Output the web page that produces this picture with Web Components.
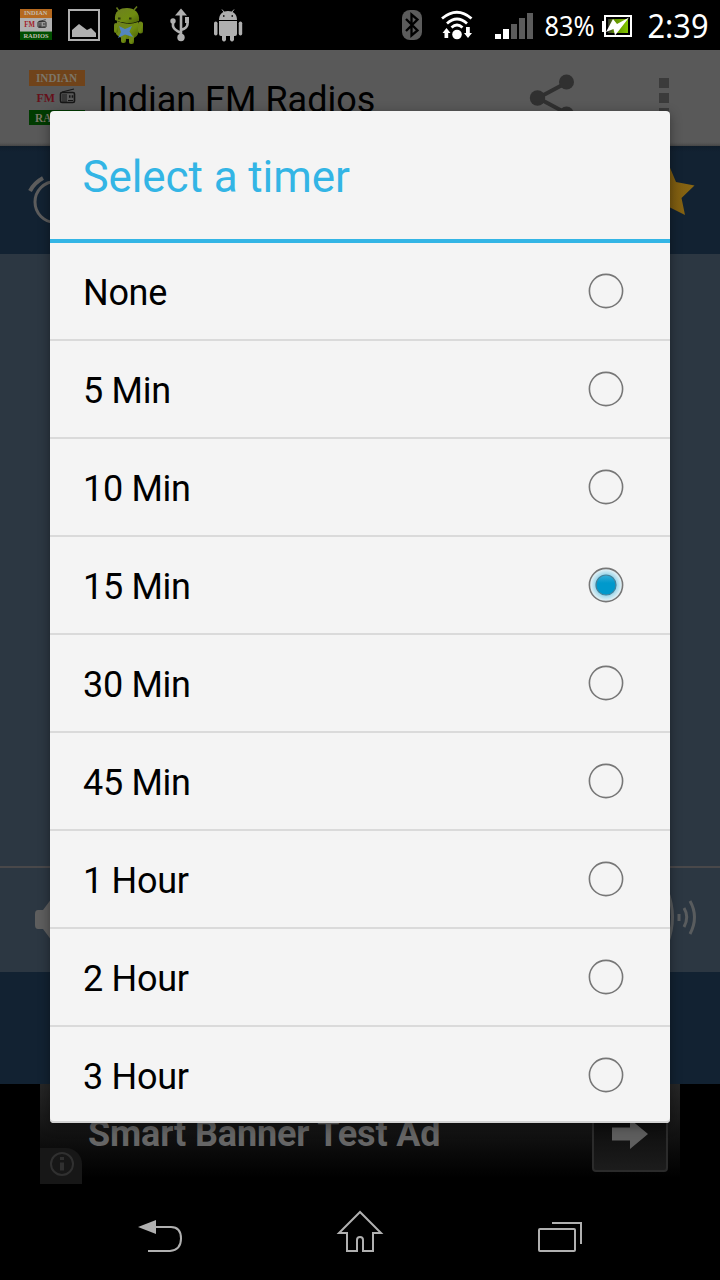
<!DOCTYPE html>
<html lang="en"><head><meta charset="utf-8"><title>Indian FM Radios</title>
<style>
html,body{margin:0;background:#000}
body{font-family:Roboto,"Liberation Sans",sans-serif;width:720px;height:1280px;overflow:hidden}
</style></head><body>
<radio-app></radio-app>
<script>
const define=(name,html,setup)=>customElements.define(name,class extends HTMLElement{
  constructor(){super();this.attachShadow({mode:'open'}).innerHTML='<style>*{box-sizing:border-box}svg{display:block;flex:none}</style>'+html;}
  connectedCallback(){if(setup)setup(this);}
});

define('radio-logo',`<style>:host{display:block;flex:none}svg{width:100%;height:100%}text{font-family:"Liberation Serif",serif;font-weight:bold}</style>
<svg viewBox="0 0 56 55" preserveAspectRatio="none">
<rect width="56" height="55" fill="var(--w)"/><rect width="56" height="16" fill="var(--o)"/><rect y="40" width="56" height="15" fill="var(--g)"/>
<text x="7" y="11.500" font-size="12" textLength="41" lengthAdjust="spacingAndGlyphs" fill="var(--t)">INDIAN</text>
<text x="7.500" y="32" font-size="13.500" textLength="18.500" lengthAdjust="spacingAndGlyphs" fill="var(--r)">FM</text>
<text x="6" y="52" font-size="12" textLength="44" lengthAdjust="spacingAndGlyphs" fill="var(--t)">RADIOS</text>
<g stroke="#161616" fill="none"><rect x="31.500" y="22.500" width="14" height="10" rx="1.500" stroke-width="1.600"/><path d="M33 22L45 19M33 25h5M33 27h5M33 29h5M33 31h5M39 30.500h5" stroke-width="1.200"/><path d="M40 26.500h1.500M42.700 26.500h1.500" stroke-width="2.500"/></g>
</svg>`);

define('status-bar',`<style>
:host{display:flex;height:50px;background:#000;align-items:flex-start}
radio-logo{width:32px;height:31px;margin:9px 0 0 20px;--o:#b5691f;--w:#b0b0b0;--g:#004f00;--t:#c2bdb0;--r:#a21c28}
.gap{flex:1}text{font-family:"Noto Sans","Open Sans",sans-serif;fill:#fff}
</style>
<radio-logo></radio-logo>
<svg width="198" height="50" viewBox="52 0 198 50">
 <defs><linearGradient id="r" x2="1" y2="1"><stop stop-color="#6d7f22"/><stop offset=".6" stop-color="#6f8c10"/><stop offset="1" stop-color="#4b6108"/></linearGradient></defs>
 <rect x="69" y="10" width="30" height="30" fill="none" stroke="#b0b0b0" stroke-width="2"/>
 <path d="M72 37V30L79 24L87 30L91 28L96 33V37Z" fill="#b0b0b0"/>
 <g fill="url(#r)"><path d="M115 20C114 11 120 8 127 8S140 12 139 21Q127 26 115 20Z"/><path d="M117 21Q128 26 138 22V34Q136 39 128 39T116 34Z"/><rect x="114" y="23" width="4" height="10" rx="2"/><rect x="138" y="21.500" width="5" height="12" rx="2.500"/><rect x="121" y="35" width="5" height="8" rx="2"/><rect x="129" y="35" width="5" height="9" rx="2"/></g>
 <path d="M119 11L116.500 7.500M134 10L137 6.500" stroke="#65791b" stroke-width="1.500"/><path d="M118 18.500h2.500M129 18.500h2.500" stroke="#27330b" stroke-width="2"/>
 <path d="M119 26L125 29L132 26L129.500 31.500L133 37L125 34.500L118 38L121 32Z" fill="#5385bd"/>
 <g stroke="#b0b0b0" fill="none" stroke-width="2.600"><path d="M181 38V12M173 22V26Q173.500 29.500 181 33M187.500 20V24Q187.500 28 181 30"/></g>
 <g fill="#b0b0b0"><path d="M181 8.500L187 15.500H175Z"/><circle cx="173" cy="21" r="2.700"/><path d="M185 17h4v6h-4z"/><circle cx="181" cy="37.500" r="3.700"/>
 <path d="M219 20C219 14 223 11 228 11S237 14 237 20Z"/><path d="M219 21H237V34Q237 36 235 36H234V40Q232 43 230 40V36H226V40Q224 43 222 40V36H221Q219 36 219 34Z"/><rect x="214" y="21.500" width="3.500" height="14" rx="1.700"/><rect x="238.700" y="21.500" width="3.500" height="14" rx="1.700"/></g>
 <path d="M224 12L222 9.500M232 12L234 9.500" stroke="#b0b0b0"/><path d="M223 16h1.500M231.500 16h1.500" stroke="#000" stroke-width="1.500"/>
</svg><div class="gap"></div>
<svg width="320" height="50" viewBox="400 0 320 50">
 <rect x="402" y="10" width="20" height="30" rx="8" fill="#5c5c5c"/><path d="M406 19L417.500 30.500L411.500 35.500V14.500L417.500 19.500L406 31" fill="none" stroke="#000" stroke-width="2.300"/>
 <g fill="none" stroke="#fff" stroke-width="2.800"><path d="M442 18.500Q457 6 471.500 18.500"/><path d="M447 23.500Q457 14.500 467 23.500"/><path d="M451.500 27.500Q457 22.500 462.500 27.500"/></g>
 <circle cx="457" cy="34.500" r="4.800" fill="#fff"/><path d="M446.500 28L450.500 33H448.200V38H444.500V33H442.500ZM468 38L472 33H469.800V27H466V33H464Z" fill="#fff"/>
 <path d="M495 34h6v5h-6zM503 29h6v10h-6z" fill="#fff"/><path d="M511 24h6v15h-6zM519 18h6v21h-6zM527 13h6v26h-6z" fill="#5c5c5c"/>
 <text x="544.500" y="36" font-size="28" textLength="50" lengthAdjust="spacingAndGlyphs">83%</text>
 <defs><linearGradient id="b"><stop offset="0" stop-color="#333"/><stop offset=".3" stop-color="#5e8c00"/><stop offset="1" stop-color="#83c600"/></linearGradient></defs>
 <path d="M602 21h3v11h-3z" fill="#fff"/><rect x="605" y="16" width="26" height="20" fill="#000" stroke="#fff" stroke-width="2"/><rect x="608" y="19" width="20" height="14" fill="url(#b)"/>
 <path d="M606 32L613 19L617 24L629 17.500L615 35.500L613.500 29Z" fill="#fff"/>
 <text x="647.500" y="37.500" font-size="32" textLength="61" lengthAdjust="spacingAndGlyphs">2:39</text>
</svg>`);

define('app-bar',`<style>
:host{display:flex;height:96px;background:linear-gradient(#595959 92px,#525252 94px,#454545);padding:20px 0 0 29px;align-items:flex-start}
radio-logo{width:56px;height:55px;--o:#70431a;--w:#595959;--g:#003b00;--t:#7c7668;--r:#661019}
span{font-size:36px;line-height:42px;margin:9px 0 0 13px;white-space:nowrap;color:#000;flex:1}
</style><radio-logo></radio-logo><span>Indian FM Radios</span>
<svg width="200" height="60" viewBox="520 70 200 60"><path d="M566 83L538 98L566 113" fill="none" stroke="#303030" stroke-width="4"/><g fill="#303030"><circle cx="566.500" cy="82" r="7.500"/><circle cx="537.500" cy="98" r="7.700"/><circle cx="566.500" cy="114" r="7.500"/></g><path d="M659 78h10v10h-10zM659 93h10v10h-10zM659 108h10v10h-10z" fill="#3b3b3b"/></svg>`);

define('tool-bar',`<style>:host{display:flex;justify-content:space-between;height:108px;background:linear-gradient(#0f1d2b,#122232 6px)}</style>
<svg width="80" height="108" viewBox="0 146 80 108" fill="none" stroke="#5c5c5c" stroke-width="3"><circle cx="55.500" cy="202" r="20.500"/><path d="M30 191Q34 183 43 178" stroke-width="4"/></svg>
<svg width="80" height="108" viewBox="640 146 80 108"><defs><linearGradient id="s" gradientUnits="userSpaceOnUse" x1="664" x2="694"><stop stop-color="#78570f"/><stop offset="1" stop-color="#896713"/></linearGradient></defs><path d="M668 163L676 182L694.500 185.500L681.500 198L685 215L669 207L653 215L656 198L644 186L661 182Z" fill="url(#s)"/></svg>`);

define('volume-bar',`<style>:host{display:flex;justify-content:space-between;height:106px;background:#2c3742;border-top:2px solid #49484a}</style>
<svg width="80" height="104" viewBox="0 868 80 104"><path d="M38 910H43L55 894V945L43 929H38Q35 929 35 925V914Q35 910 38 910Z" fill="#5e5e5e"/></svg>
<svg width="80" height="104" viewBox="640 868 80 104" fill="none" stroke="#595c5e" stroke-width="3"><path d="M667 890Q678 917 667 944"/><path d="M679 914V921"/><path d="M684 908Q689.500 917 684 927"/><path d="M690 901Q699 917 690 934"/></svg>`);

define('ad-banner',`<style>
:host{display:flex;align-items:flex-start;position:relative;height:100px;margin:0 40px;padding:12px 12px 0 48px;background:linear-gradient(#262626,#191919 35px,#0b0b0b 65px,#000 94px)}
span{font-weight:bold;font-size:36px;line-height:42px;letter-spacing:-.14px;color:#656565;flex:1;margin-top:17px;white-space:nowrap}
.go{width:76px;height:76px;border:2px solid #2b2b2b;border-radius:4px;background:linear-gradient(#050505,#1c1c1c);display:grid;place-items:center}
.info{position:absolute;left:0;bottom:0;width:42px;height:36px;border-radius:0 16px 0 0;background:#171717}
</style><span>Smart Banner Test Ad</span><div class="go"><svg width="36" height="30" viewBox="0 0 36 30"><path d="M0 8.500H18V0L36 15L18 30V21.500H0Z" fill="#5e5e5e"/></svg></div>
<svg class="info" width="42" height="36" viewBox="0 0 42 36"><circle cx="22" cy="16" r="11" fill="none" stroke="#303030" stroke-width="2"/><path d="M22 9v3M22 14.500v8" stroke="#303030" stroke-width="4"/></svg>`);

define('nav-bar',`<style>:host{display:flex;height:96px;background:#000;justify-content:center}svg{width:200px;height:96px;fill:none;stroke:#b0b0b0;stroke-width:2}</style>
<svg viewBox="60 1184 200 96"><path d="M156 1227H171Q181 1227 181 1238.500T170 1251H148"/><path d="M138 1227L156 1220V1234Z" fill="#b0b0b0" stroke="none"/></svg>
<svg viewBox="260 1184 200 96"><path d="M360 1212L339 1233H347V1251H357V1240Q357 1237 360 1237T363 1240V1251H373V1233H381Z"/></svg>
<svg viewBox="460 1184 200 96"><rect x="539" y="1229" width="36" height="22" rx="1"/><path d="M552 1223H581V1244"/></svg>`);

define('timer-option',`<style>
:host{display:flex;height:98px;flex:none;border-bottom:2px solid #dadada;padding:0 46px 0 33px;align-items:center;justify-content:space-between;font-size:36px;line-height:42px;letter-spacing:-.3px;color:#000}
:host(:last-child){border-bottom:0;height:96px}
span{margin-top:4px}.on{display:none}:host([checked]) .on{display:block}
</style><span><slot></slot></span><svg width="36" height="36" viewBox="0 0 36 36"><defs><radialGradient id="g"><stop offset=".55" stop-color="#8ad0e8"/><stop offset="1" stop-color="#eef5f7"/></radialGradient><linearGradient id="d" x2="0" y2="1"><stop stop-color="#36aed8"/><stop offset=".4" stop-color="#0099cc"/></linearGradient></defs><g class="on"><circle cx="18" cy="18" r="16.500" fill="url(#g)"/><circle cx="18" cy="18" r="10" fill="url(#d)" stroke="#46819a" stroke-width="1.200"/></g><circle cx="18" cy="18" r="16.600" fill="none" stroke="#777" stroke-width="1.600"/></svg>`);

define('timer-dialog',`<style>
:host{display:flex;flex-direction:column;width:620px;height:1012px;background:#f4f4f4;border-radius:4px;box-shadow:0 3px 12px rgba(0,0,0,.4),inset 0 -2px #d2d2d2;overflow:hidden}
header{height:132px;flex:none;border-bottom:4px solid #33b5e5;padding:4px 32px 0 32.500px;display:flex;align-items:center;font-size:44px;line-height:52px;letter-spacing:-.1px;color:#33b5e5}
main{display:flex;flex-direction:column}
</style><header><slot name="title"></slot></header><main></main>`,el=>{
 const main=el.shadowRoot.querySelector('main');
 for(const label of ['None','5 Min','10 Min','15 Min','30 Min','45 Min','1 Hour','2 Hour','3 Hour']){
  const row=document.createElement('timer-option');row.textContent=label;
  if(label===el.getAttribute('value'))row.setAttribute('checked','');
  main.append(row);
 }
});

define('radio-app',`<style>
:host{display:flex;flex-direction:column;position:relative;width:720px;height:1280px;background:#000;overflow:hidden}
.stage{flex:1;background:#2c3742}.base{height:112px;background:#122232}
timer-dialog{position:absolute;left:50px;top:111px}
</style><status-bar></status-bar><app-bar></app-bar><tool-bar></tool-bar><div class="stage"></div><volume-bar></volume-bar><div class="base"></div><ad-banner></ad-banner><nav-bar></nav-bar>
<timer-dialog value="15 Min"><span slot="title">Select a timer</span></timer-dialog>`);
</script></body></html>
